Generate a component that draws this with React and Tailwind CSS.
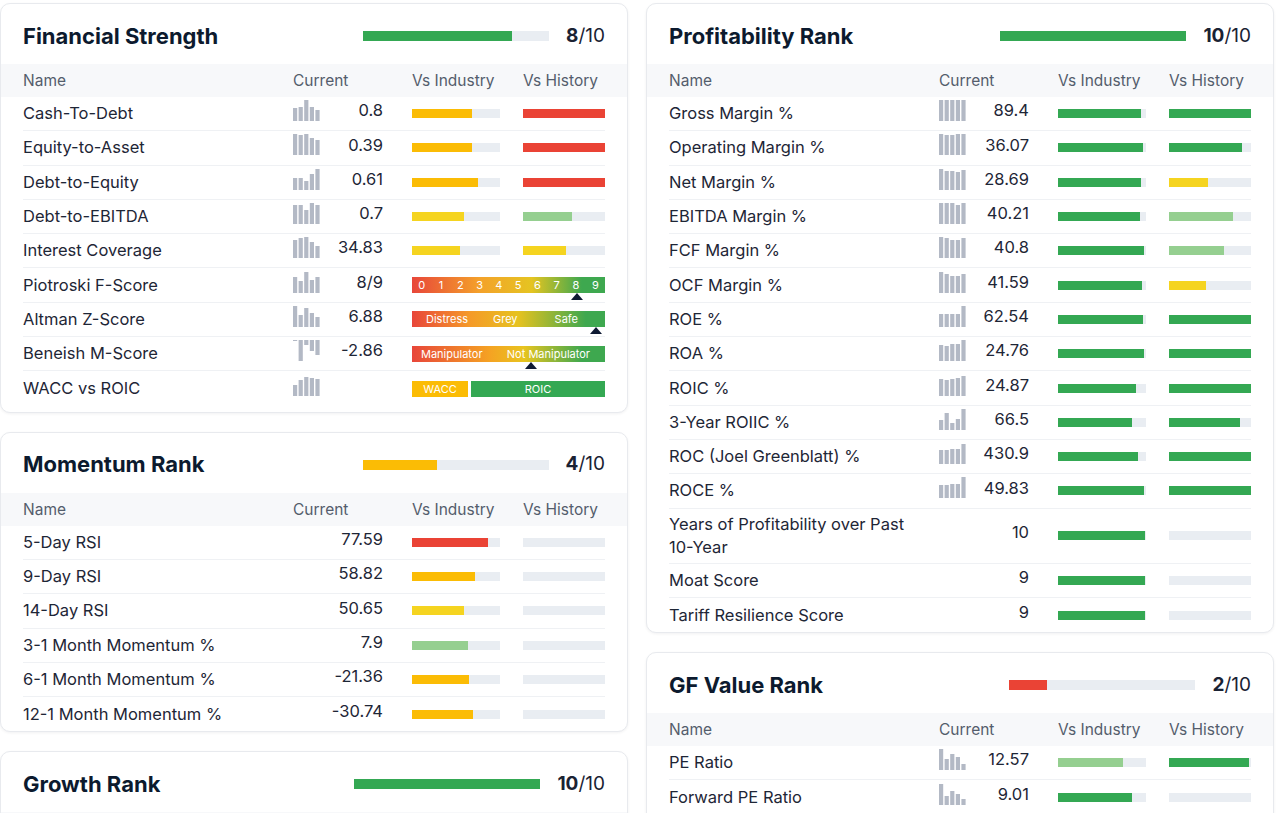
import React from "react";

// fill colours for the comparison bars
const FILL = {
  green: "bg-[#34a853]",
  red: "bg-[#ea4335]",
  amber: "bg-[#fbbc05]",
  yellow: "bg-[#f5d420]",
  lgreen: "bg-[#95cf90]",
};

const financial = [
  { name: "Cash-To-Debt", spark: [13, 14, 21, 14, 11], value: "0.8", ind: ["amber", 60], hist: ["red", 82] },
  { name: "Equity-to-Asset", spark: [21, 20, 21, 17, 15], value: "0.39", ind: ["amber", 60], hist: ["red", 82] },
  { name: "Debt-to-Equity", spark: [12, 12, 9, 16, 22], value: "0.61", ind: ["amber", 66], hist: ["red", 82] },
  { name: "Debt-to-EBITDA", spark: [19, 19, 14, 21, 19], value: "0.7", ind: ["yellow", 52], hist: ["lgreen", 49] },
  { name: "Interest Coverage", spark: [18, 20, 21, 16, 12], value: "34.83", ind: ["yellow", 48], hist: ["yellow", 43] },
  { name: "Piotroski F-Score", spark: [16, 12, 21, 13, 16], value: "8/9", special: "piotroski" },
  { name: "Altman Z-Score", spark: [22, 12, 19, 14, 10], value: "6.88", special: "altman" },
  { name: "Beneish M-Score", spark: [-1, -22, -5, -11, -15], value: "-2.86", special: "beneish" },
  { name: "WACC vs ROIC", spark: [11, 16, 19, 18, 17], value: "", special: "wacc" },
];

const momentum = [
  { name: "5-Day RSI", value: "77.59", ind: ["red", 76], hist: null },
  { name: "9-Day RSI", value: "58.82", ind: ["amber", 63], hist: null },
  { name: "14-Day RSI", value: "50.65", ind: ["yellow", 52], hist: null },
  { name: "3-1 Month Momentum %", value: "7.9", ind: ["lgreen", 56], hist: null },
  { name: "6-1 Month Momentum %", value: "-21.36", ind: ["amber", 57], hist: null },
  { name: "12-1 Month Momentum %", value: "-30.74", ind: ["amber", 61], hist: null },
];

const profitability = [
  { name: "Gross Margin %", spark: [21, 21, 21, 21, 21], value: "89.4", ind: ["green", 83], hist: ["green", 82] },
  { name: "Operating Margin %", spark: [21, 20, 20, 21, 21], value: "36.07", ind: ["green", 85], hist: ["green", 73] },
  { name: "Net Margin %", spark: [21, 19, 19, 18, 20], value: "28.69", ind: ["green", 83], hist: ["yellow", 39] },
  { name: "EBITDA Margin %", spark: [21, 21, 21, 19, 21], value: "40.21", ind: ["green", 82], hist: ["lgreen", 64] },
  { name: "FCF Margin %", spark: [21, 20, 18, 18, 20], value: "40.8", ind: ["green", 86], hist: ["lgreen", 55] },
  { name: "OCF Margin %", spark: [21, 19, 17, 17, 19], value: "41.59", ind: ["green", 84], hist: ["yellow", 37] },
  { name: "ROE %", spark: [13, 13, 13, 13, 21], value: "62.54", ind: ["green", 85], hist: ["green", 82] },
  { name: "ROA %", spark: [16, 15, 17, 17, 21], value: "24.76", ind: ["green", 86], hist: ["green", 82] },
  { name: "ROIC %", spark: [17, 16, 17, 18, 20], value: "24.87", ind: ["green", 78], hist: ["green", 82] },
  { name: "3-Year ROIIC %", spark: [10, 17, 7, 11, 21], value: "66.5", ind: ["green", 74], hist: ["green", 71] },
  { name: "ROC (Joel Greenblatt) %", spark: [14, 14, 15, 15, 20], value: "430.9", ind: ["green", 80], hist: ["green", 82] },
  { name: "ROCE %", spark: [13, 13, 14, 14, 21], value: "49.83", ind: ["green", 86], hist: ["green", 82] },
  { name: "Years of Profitability over Past 10-Year", value: "10", ind: ["green", 87], hist: null },
  { name: "Moat Score", value: "9", ind: ["green", 87], hist: null },
  { name: "Tariff Resilience Score", value: "9", ind: ["green", 87], hist: null },
];

const gfValue = [
  { name: "PE Ratio", spark: [21, 11, 16, 13, 6], value: "12.57", ind: ["lgreen", 65], hist: ["green", 80] },
  { name: "Forward PE Ratio", spark: [21, 9, 14, 11, 6], value: "9.01", ind: ["green", 74], hist: null },
  { name: "PS Ratio", spark: [21, 12, 15, 12, 7], value: "3.62", ind: ["yellow", 40], hist: ["green", 70] },
  { name: "PB Ratio", spark: [21, 13, 14, 12, 8], value: "7.72", ind: ["amber", 30], hist: ["green", 66] },
];

const growth = [
  { name: "3-Year Revenue Growth Rate", spark: [10, 12, 15, 18, 21], value: "12.4", ind: ["green", 70], hist: ["green", 60] },
  { name: "3-Year EBITDA Growth Rate", spark: [9, 13, 14, 19, 21], value: "15.8", ind: ["green", 74], hist: ["green", 64] },
];

function Spark({ data }) {
  return (
    <svg width="27" height="21" viewBox="0 0 27 21" className="shrink-0">
      {data.map((v, i) => {
        const h = Math.max(Math.abs(v), 1);
        return (
          <rect key={i} x={i * 5.6} y={v < 0 ? 0 : 21 - h} width="4.2" height={h} fill="#b3b9c5" />
        );
      })}
    </svg>
  );
}

function Bar({ fill, width }) {
  return (
    <div className={`h-[9px] bg-[#e9edf2] ${width}`}>
      {fill && <div className={`h-full ${FILL[fill[0]]}`} style={{ width: fill[1] }} />}
    </div>
  );
}

function Marker({ left }) {
  return (
    <div
      className="absolute top-full w-0 h-0 border-x-[6px] border-x-transparent border-b-[7px] border-b-[#0f1a33]"
      style={{ left }}
    />
  );
}

function Special({ kind }) {
  if (kind === "piotroski") {
    return (
      <div className="relative">
        <div className="h-4 flex text-[11px] leading-4 text-white bg-[linear-gradient(90deg,#e8463a_0%,#f4a12a_35%,#e5c421_62%,#3ea84f_88%)]">
          {[0, 1, 2, 3, 4, 5, 6, 7, 8, 9].map((n) => (
            <span key={n} className="flex-1 text-center">{n}</span>
          ))}
        </div>
        <Marker left={159} />
      </div>
    );
  }
  if (kind === "altman") {
    return (
      <div className="relative">
        <div className="h-4 flex items-center text-[11px] leading-4 text-white pl-[14px] pr-[27px] bg-[linear-gradient(90deg,#e8463a_0%,#f59a28_30%,#e6c21f_55%,#3ea84f_90%)]">
          <span>Distress</span>
          <span className="ml-[25px]">Grey</span>
          <span className="ml-auto">Safe</span>
        </div>
        <Marker left={178} />
      </div>
    );
  }
  if (kind === "beneish") {
    return (
      <div className="relative">
        <div className="h-4 flex items-center text-[11px] leading-4 text-white pl-[9px] pr-[15px] bg-[linear-gradient(90deg,#e8463a_0%,#f5a223_40%,#e8c41f_58%,#3ea84f_88%)]">
          <span>Manipulator</span>
          <span className="ml-auto">Not Manipulator</span>
        </div>
        <Marker left={113} />
      </div>
    );
  }
  return (
    <div className="h-4 flex gap-[3px] text-[11px] leading-4 text-white">
      <div className="w-[56px] bg-[#fbbc05] text-center">WACC</div>
      <div className="flex-1 bg-[#34a853] text-center">ROIC</div>
    </div>
  );
}

function Row({ row }) {
  return (
    <div className="grid grid-cols-[270px_90px_1fr_82px] items-center min-h-[34.3px] border-b border-[#eff1f4] last:border-b-0">
      <div className="py-1 pr-4 text-[16.5px] leading-[23px] text-[#1e2636]">{row.name}</div>
      <div className="flex items-center justify-between -translate-y-[3px] text-[16.5px] text-[#1e2636]">
        {row.spark ? <Spark data={row.spark} /> : <span />}
        <span>{row.value}</span>
      </div>
      {row.special ? (
        <div className="col-span-2 ml-[29px]">
          <Special kind={row.special} />
        </div>
      ) : (
        <>
          <div className="ml-[29px]">
            <Bar fill={row.ind} width="w-[88px]" />
          </div>
          <Bar fill={row.hist} width="w-[82px]" />
        </>
      )}
    </div>
  );
}

function Card({ title, score, fill, rows, pb = "pb-0" }) {
  return (
    <div className={`rounded-[10px] border border-[#e8eaee] bg-white shadow-[0_1px_3px_rgba(15,23,42,0.06)] overflow-hidden ${pb}`}>
      <div className="flex items-center h-[30px] mt-[17px] px-[22px]">
        <h2 className="flex-1 text-[22px] font-bold text-[#0c1a2e]">{title}</h2>
        <div className="w-[186px] h-[10px] bg-[#e9edf2]">
          <div className={`h-full ${FILL[fill]}`} style={{ width: `${score * 10}%` }} />
        </div>
        <div className="ml-[17px] text-[19px] text-[#1a2233]">
          <span className="font-bold">{score}</span>/10
        </div>
      </div>
      <div className="mt-[13px] h-[33px] bg-[#f7f8fa] px-[22px] grid grid-cols-[270px_90px_1fr_82px] items-center text-[15.5px] text-[#545d6c]">
        <span>Name</span>
        <span>Current</span>
        <span className="ml-[29px]">Vs Industry</span>
        <span>Vs History</span>
      </div>
      <div className="px-[22px]">
        {rows.map((r) => (
          <Row key={r.name} row={r} />
        ))}
      </div>
    </div>
  );
}

export default function App() {
  return (
    <div className="min-h-screen bg-white pt-[3px] font-['Inter',sans-serif] overflow-hidden">
      <div className="w-[1274px] grid grid-cols-2 gap-x-[18px] items-start">
        <div className="flex flex-col gap-[19px]">
          <Card title="Financial Strength" score={8} fill="green" rows={financial} pb="pb-[6px]" />
          <Card title="Momentum Rank" score={4} fill="amber" rows={momentum} />
          <Card title="Growth Rank" score={10} fill="green" rows={growth} />
        </div>
        <div className="flex flex-col gap-[19px]">
          <Card title="Profitability Rank" score={10} fill="green" rows={profitability} />
          <Card title="GF Value Rank" score={2} fill="red" rows={gfValue} />
        </div>
      </div>
    </div>
  );
}
